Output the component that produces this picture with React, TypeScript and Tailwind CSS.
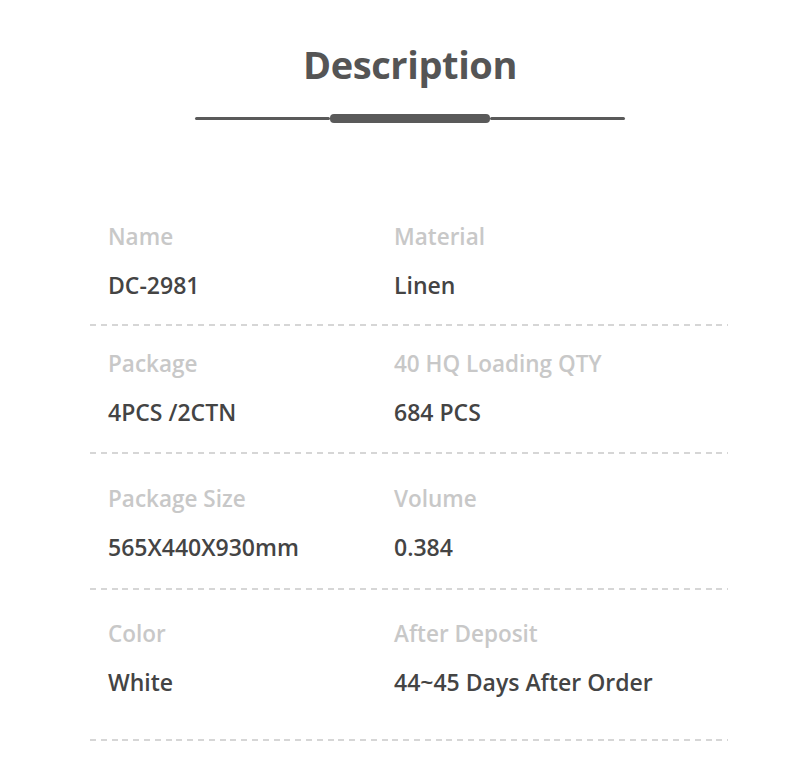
const specs = [
  { label: "Name", value: "DC-2981", label2: "Material", value2: "Linen", pt: "pt-[0px]", pb: "pb-[25px]" },
  { label: "Package", value: "4PCS /2CTN", label2: "40 HQ Loading QTY", value2: "684 PCS", pt: "pt-[24px]", pb: "pb-[26px]" },
  { label: "Package Size", value: "565X440X930mm", label2: "Volume", value2: "0.384", pt: "pt-[31px]", pb: "pb-[27px]" },
  { label: "Color", value: "White", label2: "After Deposit", value2: "44~45 Days After Order", pt: "pt-[30px]", pb: "pb-[43px]" },
];

export default function App() {
  return (
    <div className="w-[800px] h-[765px] bg-white overflow-hidden font-['Open_Sans',sans-serif]">
      <header className="flex flex-col items-center pt-[45px] pl-[20px]">
        <h1 className="text-[38px] leading-[38px] font-bold text-[#555555] tracking-[-0.4px]">Description</h1>
        <div className="flex items-center w-[430px] mt-[31px]">
          <div className="h-[3px] flex-1 rounded-full bg-[#5a5a5a]" />
          <div className="h-[9px] w-[160px] rounded-[4px] bg-[#5a5a5a]" />
          <div className="h-[3px] flex-1 rounded-full bg-[#5a5a5a]" />
        </div>
      </header>

      <dl className="ml-[90px] w-[638px] mt-[100px]">
        {specs.map((s) => (
          <div key={s.label} className={s.pt}>
            <div className={`grid grid-cols-[286px_1fr] pl-[18px] ${s.pb}`}>
              <Spec label={s.label} value={s.value} />
              <Spec label={s.label2} value={s.value2} />
            </div>
            <div className="h-[2px] bg-[repeating-linear-gradient(to_right,#d6d6d6_0_6px,transparent_6px_10.8px)]" />
          </div>
        ))}
      </dl>
    </div>
  );
}

function Spec({ label, value }: { label: string; value: string }) {
  return (
    <div>
      <dt className="text-[22.5px] leading-[28px] font-semibold text-[#c8c8c8]">{label}</dt>
      <dd className="mt-[20px] text-[23px] leading-[28px] font-semibold text-[#444444]">{value}</dd>
    </div>
  );
}
